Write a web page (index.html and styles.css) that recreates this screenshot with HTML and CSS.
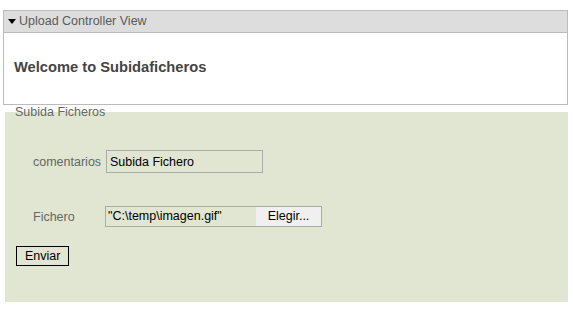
FILE: index.html
```html
<!DOCTYPE html>
<html>
<head>
    <title>Subidaficheros</title>
    <link rel="stylesheet" href="styles.css">
</head>
<body>
    <div class="panel">
        <div class="panel-header"><span class="arrow"></span>Upload Controller View</div>
        <div class="panel-body">
            <h2>Welcome to Subidaficheros</h2>
        </div>
    </div>

    <fieldset class="upload">
        <legend>Subida Ficheros</legend>

        <div class="form-row first">
            <label for="comentarios">comentarios</label>
            <input type="text" id="comentarios" value="Subida Fichero">
        </div>

        <div class="form-row">
            <label>Fichero</label>
            <div class="file-box">
                <span class="file-name">"C:\temp\imagen.gif"</span>
                <span class="file-btn">Elegir...</span>
            </div>
        </div>

        <button class="send">Enviar</button>
    </fieldset>
</body>
</html>
```

FILE: styles.css
```css
body {
    font-family: "Liberation Sans", Arial, sans-serif;
    font-size: 12.5px;
    margin: 0;
    padding: 10px 5px 0 3px;
    background: #fff;
}
.panel {
    border: 1px solid #bbb;
    width: 563px;
}
.panel-header {
    background-color: #dddddd;
    border-bottom: 1px solid #bbb;
    height: 21px;
    line-height: 21px;
    padding-left: 4px;
    color: #5a5a5a;
}
.arrow {
    display: inline-block;
    width: 0;
    height: 0;
    border-left: 4px solid transparent;
    border-right: 4px solid transparent;
    border-top: 5px solid #000;
    margin-right: 3px;
    vertical-align: 1px;
}
.panel-body {
    height: 71px;
    padding-left: 10px;
    overflow: hidden;
}
.panel-body h2 {
    margin: 0;
    padding-top: 26px;
    font-size: 14.7px;
    font-weight: bold;
    color: #444;
}
.upload {
    margin: 0 0 0 2px;
    width: 563px;
    box-sizing: border-box;
    height: 197px;
    border: none;
    padding: 0 0 0 11px;
    background-color: #e0e6d2;
}
.upload legend {
    color: #666;
    padding: 0;
    margin-left: -1px;
    line-height: 14px;
}
.form-row {
    display: flex;
    align-items: center;
    padding-left: 17px;
    margin-top: 33px;
}
.form-row.first {
    margin-top: 31px;
}
.form-row label {
    width: 73px;
    color: #666;
}
.form-row input[type="text"] {
    width: 157px;
    height: 23px;
    box-sizing: border-box;
    border: 1px solid #aaa;
    background: transparent;
    font-family: inherit;
    font-size: 12.5px;
    padding: 0 3px;
    margin: 0;
    color: #000;
}
.file-box {
    display: flex;
    width: 217px;
    height: 21px;
    box-sizing: border-box;
    border: 1px solid #aaa;
    margin-left: -1px;
    line-height: 19px;
}
.file-name {
    flex: 1;
    padding-left: 2px;
    color: #000;
}
.file-btn {
    width: 65px;
    background-color: #f0f0f0;
    text-align: center;
    color: #000;
}
.send {
    margin: 19px 0 0 0;
    background: transparent;
    border: 1px solid #000;
    font-family: inherit;
    font-size: 12.5px;
    padding: 0 8px;
    height: 20px;
    color: #000;
}
```
